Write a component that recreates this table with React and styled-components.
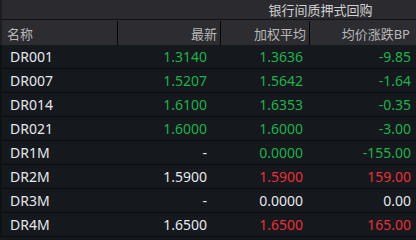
import styled, { createGlobalStyle } from "styled-components";

const GlobalStyle = createGlobalStyle`
  html, body {
    margin: 0;
    padding: 0;
    background: #15181d;
  }
  body {
    font-family: "Noto Sans", "Noto Sans CJK SC", sans-serif;
  }
`;

const COLS = "116px 103px 89px 1fr";

const Table = styled.div`
  width: 416px;
  height: 240px;
  background: #15181d;
  overflow: hidden;
`;

const GroupBar = styled.div`
  display: grid;
  grid-template-columns: ${COLS};
  height: 20px;
  box-sizing: border-box;
  background: #2a2a2f;
  border-bottom: 1px solid #111214;
  border-left: 2px solid rgba(0, 0, 0, 0.3);
`;

const GroupTitle = styled.div`
  grid-column: 3 / 5;
  display: flex;
  align-items: center;
  justify-content: center;
  font-size: 13px;
  color: #d2d2d2;
  padding-left: 4px;
`;

const HeadRow = styled.div`
  display: grid;
  grid-template-columns: ${COLS};
  height: 25px;
  background: #2c2c31;
  border-left: 2px solid rgba(0, 0, 0, 0.3);
`;

const HeadCell = styled.div`
  display: flex;
  align-items: center;
  justify-content: ${(p) => (p.left ? "flex-start" : "flex-end")};
  padding: ${(p) => (p.left ? "0 0 0 5px" : `0 ${p.pr || 3}px 0 0`)};
  font-size: 13px;
  color: #b8b8b8;
  border-right: ${(p) => (p.last ? "none" : "1px solid #050506")};
  margin-top: 1px;
`;

const Row = styled.div`
  display: grid;
  grid-template-columns: ${COLS};
  height: 24px;
  box-sizing: border-box;
  border-bottom: 1px solid #0b0c0f;
  border-left: 2px solid rgba(0, 0, 0, 0.25);
`;

const Cell = styled.div`
  display: flex;
  align-items: center;
  justify-content: ${(p) => (p.left ? "flex-start" : "flex-end")};
  padding: ${(p) => (p.left ? "0 0 0 8px" : `0 ${p.pr}px 0 0`)};
  font-size: 14px;
  color: ${(p) => p.color || "#e6e8ec"};
`;

const GREEN = "#1fb24b";
const RED = "#e8303a";
const WHITE = "#e6e8ec";

const rows = [
  { name: "DR001", last: "1.3140", avg: "1.3636", bp: "-9.85", lc: GREEN, ac: GREEN, bc: GREEN },
  { name: "DR007", last: "1.5207", avg: "1.5642", bp: "-1.64", lc: GREEN, ac: GREEN, bc: GREEN },
  { name: "DR014", last: "1.6100", avg: "1.6353", bp: "-0.35", lc: GREEN, ac: GREEN, bc: GREEN },
  { name: "DR021", last: "1.6000", avg: "1.6000", bp: "-3.00", lc: GREEN, ac: GREEN, bc: GREEN },
  { name: "DR1M", last: "-", avg: "0.0000", bp: "-155.00", lc: WHITE, ac: GREEN, bc: GREEN },
  { name: "DR2M", last: "1.5900", avg: "1.5900", bp: "159.00", lc: WHITE, ac: RED, bc: RED },
  { name: "DR3M", last: "-", avg: "0.0000", bp: "0.00", lc: WHITE, ac: WHITE, bc: WHITE },
  { name: "DR4M", last: "1.6500", avg: "1.6500", bp: "165.00", lc: WHITE, ac: RED, bc: RED },
];

export default function App() {
  return (
    <>
      <GlobalStyle />
      <Table>
        <GroupBar>
          <GroupTitle>银行间质押式回购</GroupTitle>
        </GroupBar>
        <HeadRow>
          <HeadCell left>名称</HeadCell>
          <HeadCell>最新</HeadCell>
          <HeadCell>加权平均</HeadCell>
          <HeadCell last pr={6}>均价涨跌BP</HeadCell>
        </HeadRow>
        {rows.map((r) => (
          <Row key={r.name}>
            <Cell left>{r.name}</Cell>
            <Cell pr={14} color={r.lc}>{r.last}</Cell>
            <Cell pr={7} color={r.ac}>{r.avg}</Cell>
            <Cell pr={5} color={r.bc}>{r.bp}</Cell>
          </Row>
        ))}
      </Table>
    </>
  );
}
